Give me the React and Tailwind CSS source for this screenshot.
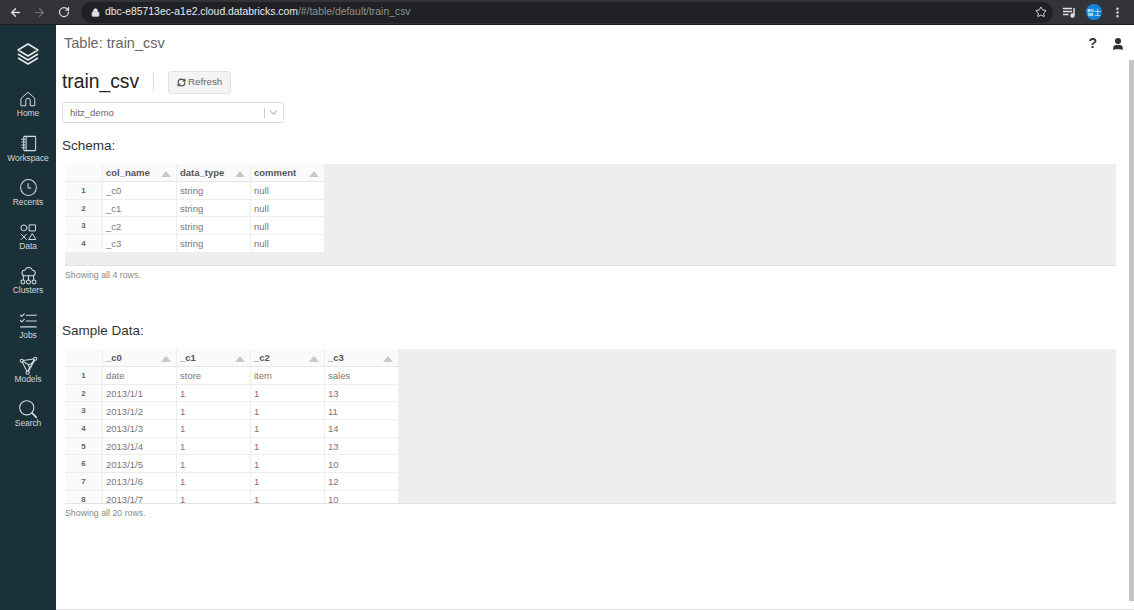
import React from 'react';
import { ArrowLeft, ArrowRight, RotateCw, Lock, Star, MoreVertical, RefreshCw, ChevronDown, User } from 'lucide-react';

const Stroke = ({ children, size = 20, vb = 24 }) => (
  <svg width={size} height={size} viewBox={`0 0 ${vb} ${vb}`} fill="none" stroke="#d5dcdf" strokeWidth="1.3" strokeLinecap="round" strokeLinejoin="round">{children}</svg>
);

const nav = [
  ['Home', <Stroke size={18}><path d="M3 11 12 3l9 8v10h-6v-7a3 3 0 0 0-6 0v7H3z" /></Stroke>],
  ['Workspace', <Stroke size={19}><rect x="6" y="3" width="15" height="18" rx="1" /><path d="M9 3v18M3.500 6.500h4M3.500 10h4M3.500 14h4M3.500 17.500h4" /></Stroke>],
  ['Recents', <Stroke size={19}><circle cx="12" cy="12" r="10" /><path d="M11.500 7v5.500h3.500" /></Stroke>],
  ['Data', <Stroke size={18}><circle cx="6.500" cy="6.500" r="4" /><rect x="14" y="2.500" width="8" height="8" /><path d="m3 15 7 7M10 15l-7 7M18 14.500l4.500 7.500h-9z" /></Stroke>],
  ['Clusters', <Stroke size={19}><path d="M7 11a3.500 3.500 0 0 1 .5-7 5 5 0 0 1 9.500 0 3.500 3.500 0 0 1 0 7H7zM5.500 11v5M12 11v5M18.500 11v5" /><circle cx="5" cy="19" r="2.500" /><circle cx="12" cy="19" r="2.500" /><circle cx="19" cy="19" r="2.500" /></Stroke>],
  ['Jobs', <Stroke size={20}><path d="m3 5 1.500 1.500L7.500 3.500M3 11.500 4.500 13l3-3M10 5h12M10 12h12M3 19h19" /></Stroke>],
  ['Models', <Stroke size={19}><circle cx="3.500" cy="6" r="2" /><circle cx="20.500" cy="3.500" r="2" /><circle cx="14" cy="12" r="2" /><circle cx="11" cy="21" r="2" /><path d="M5.500 5.700 18.500 3.800M4.300 8 10 19.200M19.800 5.400 12 19.200M5.300 7l7 4M19 5l-3.800 5.500M13.500 14 11.500 19" /></Stroke>],
  ['Search', <Stroke size={20}><circle cx="10.500" cy="10.500" r="8.500" /><path d="m17 17 5 5" strokeWidth="2" /></Stroke>],
];

const Caret = () => <span className="ml-auto mr-[5px] h-0 w-0 border-x-[5px] border-b-[6px] border-x-transparent border-b-[#c8c8c8]" />;

function Table({ cols, rows, height, footerGap, name }) {
  return (
    <div className="ml-[9px] mr-[18px]">
      <div className="overflow-hidden border-b border-[#e2e2e2] bg-[#eeeeee]" style={{ height }} data-name={name}>
        <div className="flex h-[18px] w-fit border-b border-[#e8e8e8]">
          <div className="w-[38px] border-r border-[#eeeeee] bg-[#fafafa]" />
          {cols.map((c) => (
            <div key={c} className="flex w-[74px] items-center border-r border-[#eeeeee] bg-[#fafafa] pl-[3px] pt-[2px] text-[9.500px] font-bold text-[#555555]">
              <span>{c}</span><Caret />
            </div>
          ))}
        </div>
        {rows.map((r, i) => (
          <div key={i} className="flex h-[17.700px] w-fit border-b border-[#eeeeee] bg-white">
            <div className="flex w-[38px] items-center justify-center border-r border-[#eeeeee] bg-[#fafafa] pt-[1px] text-[8px] font-bold text-[#666666]">{i + 1}</div>
            {r.map((v, j) => (
              <div key={j} className="flex w-[74px] items-center border-r border-[#eeeeee] pl-[3px] pt-[2px] text-[9.500px] text-[#777777]">{v}</div>
            ))}
          </div>
        ))}
      </div>
      <p className="mt-[3px] text-[8.800px] leading-[12px] text-[#8a8a8a]">{footerGap}</p>
    </div>
  );
}

export default function App() {
  return (
    <div className="flex h-[610px] w-[1134px] flex-col overflow-hidden bg-white font-['Liberation_Sans',Arial,sans-serif]">
      <header className="flex h-[25px] shrink-0 items-center border-b border-[#1c1d1f] bg-[#323437] pl-[9px] pr-[10px] text-[#dfe1e5]">
        <ArrowLeft size={13} strokeWidth={2.500} />
        <ArrowRight size={13} strokeWidth={2} className="ml-[11px] text-[#74767a]" />
        <RotateCw size={12} strokeWidth={2.500} className="ml-[12px]" />
        <div className="ml-[11px] flex h-[21px] flex-1 items-center rounded-full bg-[#202124] pl-[10px] pr-[6px]">
          <Lock size={9} fill="#dfe1e5" className="mr-[5px]" />
          <span className="text-[10.400px] text-[#e8eaed]">dbc-e85713ec-a1e2.cloud.databricks.com</span>
          <span className="text-[10.400px] text-[#8f9194]">/#/table/default/train_csv</span>
          <Star size={12} strokeWidth={2} className="ml-auto" />
        </div>
        <svg className="ml-[10px]" width="13" height="11" viewBox="0 0 13 11" fill="none" stroke="#dfe1e5" strokeWidth="1.500"><path d="M0 1.500h9M0 4.500h9M0 7.500h5.500M11 1v7.500" /><circle cx="9.500" cy="8.500" r="1.500" fill="#dfe1e5" /></svg>
        <span className="ml-[10px] flex h-[16px] w-[16px] items-center justify-center rounded-full bg-[#1284d8] text-[7px] text-white font-['Noto_Sans_CJK_TC',sans-serif]">智士</span>
        <MoreVertical size={13} strokeWidth={2.500} className="ml-[9px]" />
      </header>
      <div className="flex min-h-0 flex-1">
        <aside className="flex w-[56px] shrink-0 flex-col items-center bg-[#1b3139]">
          <svg className="mt-[17px]" width="24" height="24" viewBox="0 0 24 24" fill="none" stroke="#e4e9ea" strokeWidth="1.500" strokeLinejoin="round"><path d="m12 2 10 6-10 6L2 8z" /><path d="m2 12 10 6 10-6M2 16l10 6 10-6" /></svg>
          <nav className="mt-[9px] flex flex-col items-center">
            {nav.map(([label, icon]) => (
              <div key={label} className="flex h-[44.300px] w-[56px] flex-col items-center justify-end">
                <span className="flex h-[20px] items-center">{icon}</span>
                <span className="mt-[-1px] text-[8.500px] leading-[11px] tracking-[-0.1px] text-[#cfd6d9]">{label}</span>
              </div>
            ))}
          </nav>
        </aside>
        <main className="relative min-w-0 flex-1 border-b border-[#dddddd]">
          <div className="flex h-[37px] items-center pl-[8px] pr-[9px] text-[#666666]">
            <h1 className="text-[14.500px] font-normal">Table: train_csv</h1>
            <span className="ml-auto text-[14px] font-bold text-[#333333]">?</span>
            <User size={14} fill="#333333" strokeWidth={2.500} className="ml-[14px] text-[#333333]" />
          </div>
          <div className="ml-[6px] mt-[8px] flex h-[24px] items-center">
            <h2 className="text-[19.300px] font-normal leading-none text-[#222222]">train_csv</h2>
            <span className="ml-[14px] h-[18px] w-px bg-[#d8d8d8]" />
            <button className="ml-[14px] flex h-[23px] w-[63px] items-center justify-center gap-[2px] rounded-[3px] border border-[#e2e2e2] bg-[#f4f4f4] pt-[1px] text-[9.800px] text-[#666666]">
              <RefreshCw size={9} strokeWidth={3} className="text-[#444444]" />Refresh
            </button>
          </div>
          <div className="ml-[6px] mt-[8px] flex h-[21px] w-[222px] items-center rounded-[3px] border border-[#dddddd] pl-[7px] pr-[3px] text-[9.500px] text-[#666666]">
            <span className="pt-[2px]">hitz_demo</span>
            <span className="ml-auto h-[10px] w-px bg-[#cccccc]" />
            <ChevronDown size={13} className="ml-[2px] text-[#bbbbbb]" />
          </div>
          <h3 className="ml-[6px] mt-[14px] text-[13.500px] font-normal leading-[18px] text-[#333333]">Schema:</h3>
          <div className="mt-[9px]">
            <Table
              name="schema"
              height={102}
              cols={['col_name', 'data_type', 'comment']}
              rows={[['_c0', 'string', 'null'], ['_c1', 'string', 'null'], ['_c2', 'string', 'null'], ['_c3', 'string', 'null']]}
              footerGap="Showing all 4 rows."
            />
          </div>
          <h3 className="ml-[6px] mt-[41px] text-[13.500px] font-normal leading-[18px] text-[#333333]">Sample Data:</h3>
          <div className="mt-[9px]">
            <Table
              name="sample"
              height={155}
              cols={['_c0', '_c1', '_c2', '_c3']}
              rows={[['date', 'store', 'item', 'sales'], ['2013/1/1', '1', '1', '13'], ['2013/1/2', '1', '1', '11'], ['2013/1/3', '1', '1', '14'], ['2013/1/4', '1', '1', '13'], ['2013/1/5', '1', '1', '10'], ['2013/1/6', '1', '1', '12'], ['2013/1/7', '1', '1', '10']]}
              footerGap="Showing all 20 rows."
            />
          </div>
          <div className="absolute right-0 top-[35px] bottom-[8px] w-[5px] bg-[#c1c5c6]" />
        </main>
      </div>
    </div>
  );
}
